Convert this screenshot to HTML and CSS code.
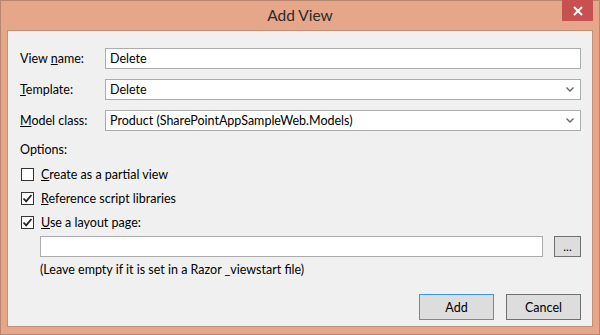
FILE: index.html
```html
<!DOCTYPE html>
<html lang="en">
<head>
    <meta charset="UTF-8">
    <title>Add View</title>
    <link rel="stylesheet" href="styles.css">
</head>
<body>
    <div class="window">
        <!-- Title bar -->
        <div class="titlebar">
            <span class="title">Add View</span>
            <button class="close-btn" title="Close">
                <svg width="10" height="10" viewBox="0 0 10 10"><path d="M1 1L9 9M9 1L1 9" stroke="#fff" stroke-width="2"/></svg>
            </button>
        </div>

        <!-- Dialog body -->
        <div class="client">
            <div class="field-row">
                <label class="field-label">View <u>n</u>ame:</label>
                <input type="text" class="text-input" value="Delete">
            </div>
            <div class="field-row">
                <label class="field-label"><u>T</u>emplate:</label>
                <div class="combo">
                    <span>Delete</span>
                    <svg width="8" height="5" viewBox="0 0 8 5"><path d="M0.5 0.5L4 4L7.5 0.5" stroke="#666" stroke-width="1.4" fill="none"/></svg>
                </div>
            </div>
            <div class="field-row">
                <label class="field-label"><u>M</u>odel class:</label>
                <div class="combo">
                    <span>Product (SharePointAppSampleWeb.Models)</span>
                    <svg width="8" height="5" viewBox="0 0 8 5"><path d="M0.5 0.5L4 4L7.5 0.5" stroke="#666" stroke-width="1.4" fill="none"/></svg>
                </div>
            </div>

            <div class="options-title">Options:</div>

            <label class="check-row">
                <span class="checkbox"></span>
                <span><u>C</u>reate as a partial view</span>
            </label>
            <label class="check-row">
                <span class="checkbox checked">
                    <svg width="11" height="11" viewBox="0 0 11 11"><path d="M1.5 5.5L4.2 8.3L9.5 2" stroke="#222" stroke-width="1.8" fill="none"/></svg>
                </span>
                <span><u>R</u>eference script libraries</span>
            </label>
            <label class="check-row">
                <span class="checkbox checked">
                    <svg width="11" height="11" viewBox="0 0 11 11"><path d="M1.5 5.5L4.2 8.3L9.5 2" stroke="#222" stroke-width="1.8" fill="none"/></svg>
                </span>
                <span><u>U</u>se a layout page:</span>
            </label>

            <div class="layout-row">
                <input type="text" class="text-input">
                <button class="browse-btn">...</button>
            </div>
            <div class="hint">(Leave empty if it is set in a Razor _viewstart file)</div>

            <div class="actions">
                <button class="btn btn-default">Add</button>
                <button class="btn">Cancel</button>
            </div>
        </div>
    </div>
</body>
</html>
```

FILE: styles.css
```css
body {
    margin: 0;
    padding: 0;
    font-family: Lato, "Open Sans", sans-serif;
    font-size: 12.5px;
    color: #000;
}
.window {
    width: 600px;
    height: 335px;
    box-sizing: border-box;
    background-color: #e5a68a;
    border: 1px solid #b9876f;
    display: flex;
    flex-direction: column;
}
.titlebar {
    height: 29px;
    position: relative;
    display: flex;
    justify-content: center;
    align-items: center;
}
.title {
    font-size: 15.5px;
    color: #2b2b2b;
    margin-top: -2px;
}
.close-btn {
    position: absolute;
    top: -1px;
    right: 6px;
    width: 31px;
    height: 21px;
    border: none;
    padding: 0;
    background-color: #c75050;
    display: flex;
    align-items: center;
    justify-content: center;
}
.client {
    flex: 1;
    margin: 0 6px 7px 6px;
    background-color: #f0f0f0;
    border: 1px solid #c48d76;
    padding: 17px 11px 0 12px;
    display: flex;
    flex-direction: column;
}
.field-row {
    display: flex;
    align-items: center;
    margin-bottom: 10px;
}
.field-label {
    width: 85px;
}
.text-input, .combo {
    flex: 1;
    height: 21px;
    box-sizing: border-box;
    border: 1px solid #acacac;
    background-color: #fff;
    font-family: inherit;
    font-size: 12.5px;
    padding: 0 4px;
    margin: 0;
    outline: none;
}
.combo {
    display: flex;
    align-items: center;
    justify-content: space-between;
    padding-right: 6px;
}
.options-title {
    margin-top: 0;
    height: 18px;
    line-height: 18px;
}
.check-row {
    display: flex;
    align-items: center;
    margin-top: 6px;
    height: 18px;
}
.checkbox {
    width: 13px;
    height: 13px;
    box-sizing: border-box;
    border: 1px solid #333;
    background-color: #fff;
    margin: 0 7px 0 1px;
    display: flex;
    align-items: center;
    justify-content: center;
}
.layout-row {
    display: flex;
    margin: 5px 0 0 20px;
}
.browse-btn {
    width: 27px;
    height: 21px;
    margin-left: 11px;
    padding: 0;
    border: 1px solid #707070;
    background-color: #dddddd;
    font-family: inherit;
    font-size: 12px;
}
.hint {
    margin: 5px 0 0 20px;
}
.actions {
    display: flex;
    justify-content: flex-end;
    gap: 12px;
    margin-top: 17px;
}
.btn {
    width: 75px;
    height: 26px;
    border: 1px solid #707070;
    background-color: #dddddd;
    font-family: inherit;
    font-size: 12.5px;
    padding: 0;
}
.btn-default {
    border-color: #3c97e8;
}
```
